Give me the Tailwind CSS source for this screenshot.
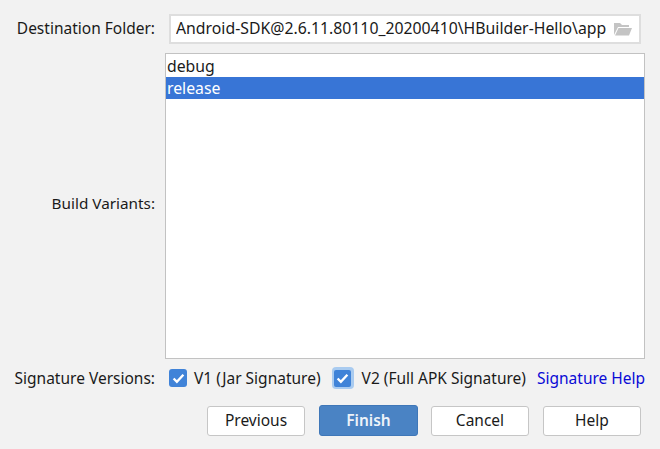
<!DOCTYPE html>
<html lang="en">
<head>
<meta charset="UTF-8">
<title>Generate Signed Bundle or APK</title>
<script src="https://cdn.jsdelivr.net/npm/@tailwindcss/browser@4"></script>
</head>
<body class="w-[660px] h-[449px] overflow-hidden bg-[#f2f2f2] text-[15.5px] text-[#1a1a1a] font-['Noto_Sans',sans-serif]">
  <div class="flex flex-col pt-[14px]">
    <!-- destination folder -->
    <div class="flex items-center h-[30px]">
      <span class="w-[155px] text-right leading-none pb-[1px]">Destination Folder:</span>
      <div class="ml-[14px] w-[472px] h-[30px] flex items-center bg-white border-2 border-[#dedede] pl-[5px] pr-[6px]">
        <span class="flex-1 whitespace-nowrap overflow-hidden text-[15.8px]">Android-SDK@2.6.11.80110_20200410\HBuilder-Hello\app</span>
        <svg width="20" height="16" viewBox="0 0 20 16" class="shrink-0">
          <path d="M1 14V2h6l2 2h7v2H5z" fill="#c4c4c4"/>
          <path d="M5.5 7H19l-3 7.5H2z" fill="#c4c4c4"/>
        </svg>
      </div>
    </div>
    <!-- build variants -->
    <div class="flex items-center mt-[9px] h-[306px]">
      <span class="w-[155px] text-right leading-none pb-[5px] text-[15.3px]">Build Variants:</span>
      <div class="ml-[10px] w-[480px] h-[306px] bg-white border border-[#c2c2c2] pt-[1px] leading-[22px] text-[15.8px]">
        <div class="h-[22px] pl-[1px] text-[#1a1a1a]">debug</div>
        <div class="h-[22px] pl-[1px] bg-[#3875d6] text-white">release</div>
      </div>
    </div>
    <!-- signature versions -->
    <div class="flex items-center mt-[8px] h-[22px] whitespace-nowrap">
      <span class="w-[155px] text-right leading-none pt-[2px]">Signature Versions:</span>
      <span class="ml-[14px] w-[18px] h-[18px] rounded-[3px] bg-[#4083d8] flex items-center justify-center">
        <svg width="13" height="11" viewBox="0 0 12 10"><path d="M1.5 5l3 3 6-6.5" fill="none" stroke="#fff" stroke-width="2.2"/></svg>
      </span>
      <span class="ml-[7px] pt-[2px]">V1 (Jar Signature)</span>
      <span class="ml-[11px] w-[22px] h-[22px] rounded-[4px] bg-[#a9cbf0] flex items-center justify-center">
        <span class="w-[17px] h-[17px] rounded-[2px] bg-[#4083d8] flex items-center justify-center">
          <svg width="13" height="11" viewBox="0 0 12 10"><path d="M1.5 5l3 3 6-6.5" fill="none" stroke="#fff" stroke-width="2.2"/></svg>
        </span>
      </span>
      <span class="ml-[8px] pt-[2px]">V2 (Full APK Signature)</span>
      <span class="ml-[11px] pt-[2px] text-[#0a0ad6]">Signature Help</span>
    </div>
    <!-- buttons -->
    <div class="flex justify-end items-center pr-[19px] mt-[16px]">
      <button class="w-[98px] h-[30px] bg-white border border-[#c6c6c6] rounded-[3px]">Previous</button>
      <button class="ml-[14px] w-[99px] h-[31px] bg-[#4a83c4] border border-[#3f77b8] rounded-[3px] text-[#eef3f9] font-semibold">Finish</button>
      <button class="ml-[13px] w-[98px] h-[30px] bg-white border border-[#c6c6c6] rounded-[3px]">Cancel</button>
      <button class="ml-[14px] w-[98px] h-[30px] bg-white border border-[#c6c6c6] rounded-[3px]">Help</button>
    </div>
  </div>
</body>
</html>
